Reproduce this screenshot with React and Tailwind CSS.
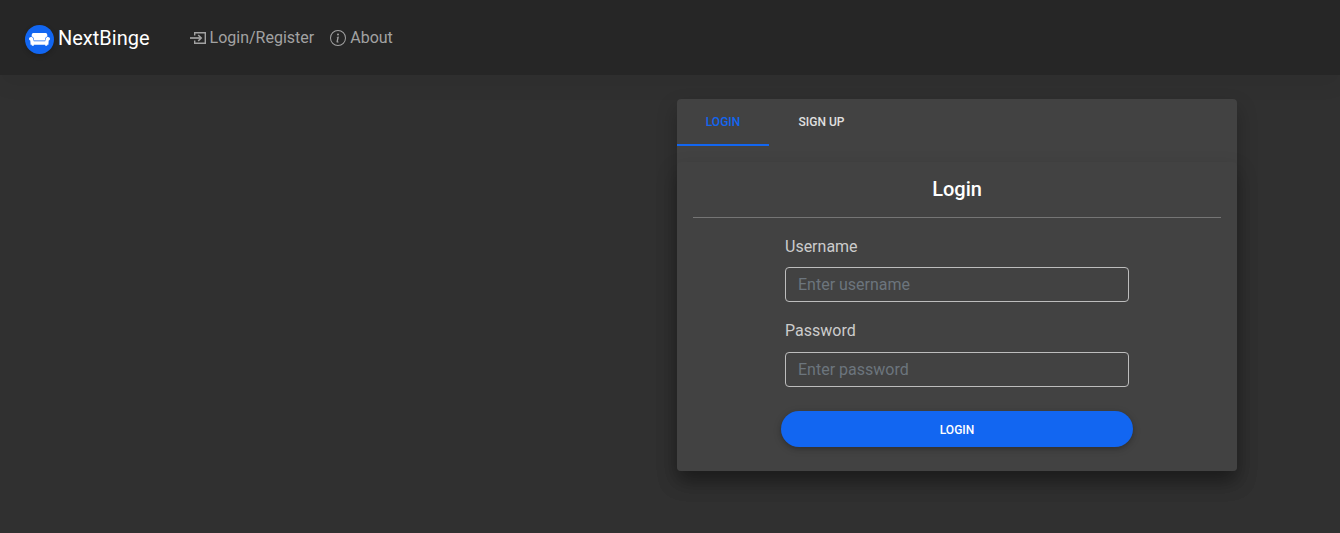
import { BsInfoCircle } from "react-icons/bs";

function SofaIcon({ className }) {
  return (
    <svg viewBox="0 0 21 13" fill="currentColor" className={className}>
      <path d="M4.600 0h11.800c1 0 1.700.6 1.800 1.500l.2 1.900c-1.300.2-1.900.9-2.100 1.900l-.4 2.300H5.100l-.4-2.300C4.500 4.300 3.900 3.600 2.600 3.400l.2-1.900C2.900.6 3.600 0 4.600 0z" />
      <path d="M2 3.900c1.200 0 2 .6 2.200 1.700l.6 2.700h11.400l.6-2.700c.2-1.100 1-1.700 2.200-1.700 1.200 0 2 .9 2 1.900 0 .9-.5 1.500-1.300 1.800l-.3 4.200h-1.200v.9h-2v-.9H4.800v.9h-2v-.9H1.600L1.300 7.600C.5 7.300 0 6.700 0 5.800c0-1 .8-1.900 2-1.900z" />
    </svg>
  );
}

function EnterIcon({ className }) {
  return (
    <svg viewBox="0 0 16 12" fill="none" stroke="currentColor" className={className}>
      <path d="M4.700 3.400V.7h10.600v10.600H4.700V8.600" strokeWidth="1.400" />
      <path d="M0 6h11" strokeWidth="1.700" />
      <path d="M8.200 3L11.200 6l-3 3" strokeWidth="1.600" />
    </svg>
  );
}

function Field({ label, type, placeholder, className, inputClassName }) {
  return (
    <label className={`block text-base leading-6 text-[#cccccc] ${className}`}>
      {label}
      <input
        type={type}
        placeholder={placeholder}
        className={`block h-[35px] w-full rounded-[4px] border border-[#bdbdbd] bg-transparent px-3 text-base text-white outline-none placeholder:text-[#6c757d] ${inputClassName}`}
      />
    </label>
  );
}

export default function App() {
  return (
    <div className="flex h-[533px] flex-col bg-[#303030] font-['Roboto',sans-serif] text-white">
      <nav className="flex h-[75px] shrink-0 items-center bg-[#262626] pl-[25px] shadow-[0_10px_20px_0_rgba(0,0,0,0.05)]">
        <a className="flex items-center text-xl">
          <span className="mr-1 mt-[4px] flex size-[29px] items-center justify-center rounded-full bg-[#1266f1] shadow-[0_2px_5px_0_rgba(0,0,0,0.2)]">
            <SofaIcon className="h-[13px] w-[21px]" />
          </span>
          NextBinge
        </a>
        <a className="ml-10 flex items-center gap-1 text-base text-[#a2a2a2]">
          <EnterIcon className="h-3 w-4" />
          Login/Register
        </a>
        <a className="ml-4 flex items-center gap-1 text-base text-[#a2a2a2]">
          <BsInfoCircle className="size-4" />
          About
        </a>
      </nav>
      <main className="ml-[677px] mt-6 h-[372px] w-[560px] rounded-[4px] bg-[#424242] shadow-[0_10px_20px_0_rgba(0,0,0,0.25)]">
        <div className="flex h-[47px] text-xs font-medium">
          <button className="w-[92px] border-b-2 border-[#1266f1] uppercase text-[#1266f1]">Login</button>
          <button className="w-[105px] border-b-2 border-transparent uppercase text-[#e0e0e0]">Sign up</button>
        </div>
        <section className="mt-4 h-[309px] rounded-[4px] bg-[#424242] px-4 shadow-[0_10px_20px_0_rgba(0,0,0,0.25)]">
          <h5 className="flex h-[56px] items-center justify-center border-b border-[#757575] pb-[2px] text-xl font-medium">Login</h5>
          <form className="px-[92px] pt-[17px]">
            <Field label="Username" type="text" placeholder="Enter username" inputClassName="mt-2" />
            <Field label="Password" type="password" placeholder="Enter password" className="mt-[17px]" inputClassName="mt-[9px]" />
            <button type="button" className="-mx-1 mt-6 h-9 w-[352px] rounded-full bg-[#1266f1] pt-[2px] text-xs font-medium uppercase shadow-[0_2px_5px_0_rgba(0,0,0,0.2),0_2px_10px_0_rgba(0,0,0,0.1)]">Login</button>
          </form>
        </section>
      </main>
    </div>
  );
}
